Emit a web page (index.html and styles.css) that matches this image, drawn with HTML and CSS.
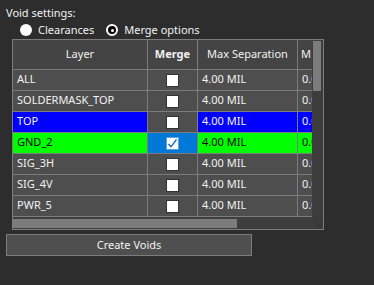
FILE: index.html
```html
<!DOCTYPE html>
<html>
<head>
<meta charset="utf-8">
<link rel="stylesheet" href="styles.css">
</head>
<body>
<div class="panel">
  <div class="title">Void settings:</div>
  <div class="radios">
    <label class="opt"><span class="radio"></span>Clearances</label>
    <label class="opt"><span class="radio on"></span>Merge options</label>
  </div>
  <div class="grid-box">
    <div class="grid-main">
      <div class="viewport">
        <div class="row head">
          <div class="c c1">Layer</div>
          <div class="c c2h bold">Merge</div>
          <div class="c c3">Max Separation</div>
          <div class="c c4">M</div>
        </div>
        <div class="row">
          <div class="c c1">ALL</div>
          <div class="c c2"><span class="cb"></span></div>
          <div class="c c3">4.00 MIL</div>
          <div class="c c4">0.00</div>
        </div>
        <div class="row">
          <div class="c c1">SOLDERMASK_TOP</div>
          <div class="c c2"><span class="cb"></span></div>
          <div class="c c3">4.00 MIL</div>
          <div class="c c4">0.00</div>
        </div>
        <div class="row blue">
          <div class="c c1">TOP</div>
          <div class="c c2"><span class="cb"></span></div>
          <div class="c c3">4.00 MIL</div>
          <div class="c c4">0.00</div>
        </div>
        <div class="row green">
          <div class="c c1">GND_2</div>
          <div class="c c2 sel"><span class="cb checked"><svg width="11" height="11" viewBox="0 0 11 11"><path d="M1.5 6 L4 8.8 L9.5 1.5" fill="none" stroke="#0a64c8" stroke-width="1.3"/></svg></span></div>
          <div class="c c3">4.00 MIL</div>
          <div class="c c4">0.00</div>
        </div>
        <div class="row">
          <div class="c c1">SIG_3H</div>
          <div class="c c2"><span class="cb"></span></div>
          <div class="c c3">4.00 MIL</div>
          <div class="c c4">0.00</div>
        </div>
        <div class="row">
          <div class="c c1">SIG_4V</div>
          <div class="c c2"><span class="cb"></span></div>
          <div class="c c3">4.00 MIL</div>
          <div class="c c4">0.00</div>
        </div>
        <div class="row">
          <div class="c c1">PWR_5</div>
          <div class="c c2"><span class="cb"></span></div>
          <div class="c c3">4.00 MIL</div>
          <div class="c c4">0.00</div>
        </div>
      </div>
      <div class="vscroll"><div class="vthumb"></div></div>
    </div>
    <div class="hscroll-row">
      <div class="hscroll"><div class="hthumb"></div></div>
      <div class="corner"></div>
    </div>
  </div>
  <button class="btn">Create Voids</button>
</div>
</body>
</html>
```
FILE: styles.css
```css
html, body {
  margin: 0;
  padding: 0;
  background: #2d2d2d;
}
body {
  font-family: "Noto Sans", "Open Sans", sans-serif;
  font-size: 11px;
  color: #f2f2f2;
  width: 374px;
  height: 285px;
  overflow: hidden;
}
.panel {
  padding: 5px 0 0 6px;
  display: flex;
  flex-direction: column;
}
.title {
  height: 16px;
  line-height: 16px;
}
.radios {
  display: flex;
  padding-left: 14px;
  height: 18px;
  align-items: center;
}
.opt {
  display: flex;
  align-items: center;
  line-height: 16px;
}
.opt + .opt { margin-left: 12px; }
.radio {
  width: 12px;
  height: 12px;
  border-radius: 50%;
  background: #fff;
  margin-right: 6px;
  position: relative;
  box-sizing: border-box;
}
.radio.on {
  border: 2px solid #fff;
  background: #000;
}
.radio.on::after {
  content: "";
  position: absolute;
  left: 2.5px;
  top: 2.5px;
  width: 3px;
  height: 3px;
  border-radius: 50%;
  background: #fff;
}
.grid-box {
  margin-left: 6px;
  width: 310px;
  border: 1px solid #7c7c7c;
  display: flex;
  flex-direction: column;
  background: #3c3c3c;
}
.grid-main {
  display: flex;
}
.viewport {
  width: 300px;
  overflow: hidden;
  background: #3c3c3c;
}
.row {
  display: flex;
  width: 400px;
  height: 21px;
  background: #4e4e4e;
}
.row.head {
  height: 30px;
  background: #444444;
}
.c {
  box-sizing: border-box;
  border-right: 1px solid #7c7c7c;
  border-bottom: 1px solid #7c7c7c;
  padding: 1px 0 0 4px;
  line-height: 16px;
  white-space: nowrap;
  overflow: hidden;
}
.head .c {
  text-align: center;
  padding: 6px 0 0 0;
}
.head .c4 { text-align: left; padding-left: 3px; }
.bold { font-weight: bold; }
.c1 { width: 135px; }
.c2, .c2h { width: 50px; }
.c2 { display: flex; justify-content: center; align-items: center; padding: 0; }
.c3 { width: 100px; }
.c4 { width: 115px; }
.blue { background: #0000ff; }
.blue .c2 { background: #4e4e4e; }
.green { background: #00ff00; color: #000; }
.green .c2.sel { background: #0078d7; }
.cb {
  width: 13px;
  height: 13px;
  box-sizing: border-box;
  background: #fff;
  border: 1px solid #333;
  display: flex;
  align-items: center;
  justify-content: center;
}
.cb.checked {
  border-color: #5aa0e6;
}
.vscroll {
  width: 10px;
  background: #3c3c3c;
  padding-top: 1px;
  padding-left: 1px;
}
.vthumb {
  width: 8px;
  height: 50px;
  background: #7c7c7c;
}
.hscroll-row {
  display: flex;
  height: 12px;
}
.hscroll {
  width: 300px;
  background: #3e3e3e;
  padding-top: 2px;
  box-sizing: border-box;
}
.hthumb {
  width: 224px;
  height: 9px;
  background: #7c7c7c;
}
.corner {
  width: 10px;
  background: #3a3a3a;
}
.btn {
  margin-top: 4px;
  width: 246px;
  height: 22px;
  background: #4f4f4f;
  border: 1px solid #7c7c7c;
  color: #f2f2f2;
  font-family: "Noto Sans", "Open Sans", sans-serif;
  font-size: 11px;
  padding: 0;
  line-height: 18px;
}
```
